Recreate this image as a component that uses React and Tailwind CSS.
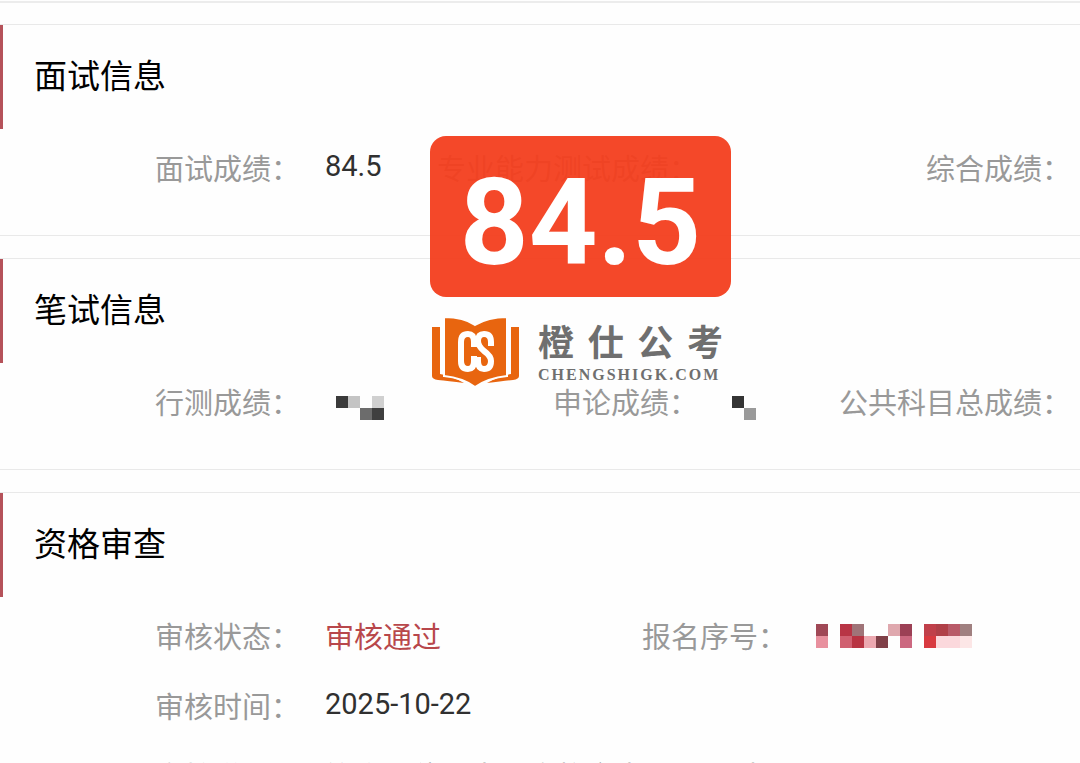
import React from "react";

const INTERVIEW_GRID = "grid-cols-[300px_135fr_263px_140fr_233px_9fr]";
const REVIEW_GRID = "grid-cols-[300px_224fr_263px_293fr]";

const XINGCE = [
  ["#3a3a3a", "#c4c4c4", null, "#d0d0d0"],
  [null, null, "#6c6c6c", "#3f3f3f"],
];

const SHENLUN = [
  ["#343434", null],
  [null, "#9a9a9a"],
];

const SERIAL = [
  ["#a04856", null, "#b83545", "#a07478", null, null, "#dfa8ae", "#9c4055", null, "#c0404a", "#b04048", "#b85a68", "#a08080"],
  ["#e8909e", null, "#d06070", "#b83442", "#eca8b0", "#804048", null, "#cc6880", null, "#d83a40", "#fbd8dc", "#fbd8dc", "#fce6e6"],
];

// masked value, drawn as 12px blocks
function Mosaic({ cells }) {
  const cols = cells[0].length;
  return (
    <svg width={cols * 12} height={24} viewBox={`0 0 ${cols * 12} 24`} className="shrink-0" aria-hidden="true">
      {cells.map((row, y) =>
        row.map((color, x) =>
          color ? <rect key={`${x}-${y}`} x={x * 12} y={y * 12} width="12" height="12" fill={color} /> : null
        )
      )}
    </svg>
  );
}

function Section({ title, children }) {
  return (
    <section className="border-y border-[#e9e9e9] bg-[#fefefe] pb-[30px]">
      <h2 className="flex h-[104px] items-center border-l-[3px] border-[#b5525a] pl-[31px] text-[33px] leading-[48px] text-black">
        {title}
      </h2>
      <dl className="pt-1.5">{children}</dl>
    </section>
  );
}

function Row({ grid, children }) {
  return <div className={`grid h-[70px] items-center text-[29px] leading-[40px] ${grid}`}>{children}</div>;
}

function Label({ children }) {
  return <dt className="whitespace-nowrap text-right text-[#999999]">{children}</dt>;
}

function Value({ children, className = "pb-2 pl-[25px] text-[#303030]" }) {
  return <dd className={`whitespace-nowrap ${className}`}>{children}</dd>;
}

function BookLogo() {
  return (
    <svg width="88" height="70" viewBox="0 0 88 70" className="shrink-0" aria-hidden="true">
      <g fill="#e8650f">
        <path d="M0 10h8v47q12 2 24 9q-16-2-26-3q-6-1-6-4z" />
        <path d="M87 10h-8v47q-12 2-24 9q16-2 26-3q6-1 6-4z" />
        <path d="M12 0q20 0 31 8q13-8 32-8v59q-19 2-32 11q-12-9-31-11z" stroke="#fefefe" strokeWidth="2" />
      </g>
      <g fill="none" stroke="#fff" strokeWidth="6">
        <path d="M42 30v-5q0-8-6-8q-7 0-7 8v19q0 8 7 8q6 0 6-8v-5" />
        <path d="M59 29v-4q0-8-7-8q-6 0-6 7q0 5 6 10q7 5 7 10q0 8-7 8q-6 0-6-8v-4" />
      </g>
    </svg>
  );
}

export default function App() {
  return (
    <main className="relative min-h-screen overflow-hidden bg-[#fefefe] font-[Roboto,'Noto_Sans_CJK_SC',sans-serif]">
      <div className="mb-[21px] h-[3px] border-b-2 border-[#ececec]" />

      <div className="flex flex-col gap-[22px]">
        <Section title="面试信息">
          <Row grid={INTERVIEW_GRID}>
            <Label>面试成绩：</Label>
            <Value>84.5</Value>
            <Label>专业能力测试成绩：</Label>
            <Value />
            <Label>综合成绩：</Label>
          </Row>
        </Section>

        <Section title="笔试信息">
          <Row grid={INTERVIEW_GRID}>
            <Label>行测成绩：</Label>
            <Value className="pl-9 pt-2">
              <Mosaic cells={XINGCE} />
            </Value>
            <Label>申论成绩：</Label>
            <Value className="pl-[34px] pt-2">
              <Mosaic cells={SHENLUN} />
            </Value>
            <Label>公共科目总成绩：</Label>
          </Row>
        </Section>

        <Section title="资格审查">
          <Row grid={REVIEW_GRID}>
            <Label>审核状态：</Label>
            <Value className="pl-[25px] text-[#b8474b]">审核通过</Value>
            <Label>报名序号：</Label>
            <Value className="pb-1 pl-[29px]">
              <Mosaic cells={SERIAL} />
            </Value>
          </Row>
          <Row grid={REVIEW_GRID}>
            <Label>审核时间：</Label>
            <Value>2025-10-22</Value>
          </Row>
          <Row grid={REVIEW_GRID}>
            <Label>审核说明：</Label>
            <Value className="pl-[25px] text-[#303030]">符合职位要求，资格审查予以通过</Value>
          </Row>
        </Section>
      </div>

      {/* score sticker and brand mark */}
      <div className="absolute left-[430px] top-[136px] w-[301px]">
        <div className="flex h-[161px] items-center justify-center rounded-2xl bg-[#f33e1e]/95 pt-3 text-[120px] font-bold leading-none text-white">
          84.5
        </div>
        <div className="mt-5 flex gap-[18px] pl-[2px]">
          <BookLogo />
          <div className="flex-1 pr-2 pt-[2px] text-[#6f6f6f]">
            <div className="flex justify-between text-[36px] font-bold leading-[50px]">
              <span>橙</span>
              <span>仕</span>
              <span>公</span>
              <span>考</span>
            </div>
            <div className="font-['Liberation_Serif',serif] text-[16px] font-bold leading-3 tracking-[2px]">
              CHENGSHIGK.COM
            </div>
          </div>
        </div>
      </div>
    </main>
  );
}
